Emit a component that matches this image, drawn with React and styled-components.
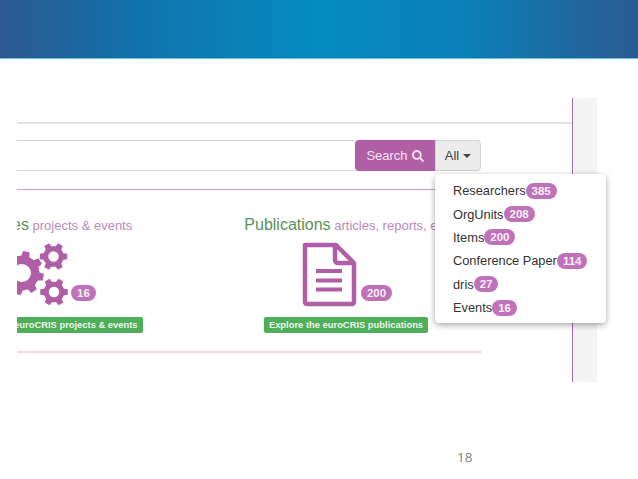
import styled, { createGlobalStyle } from 'styled-components';
import { FaSearch } from 'react-icons/fa';

const MENU_ITEMS = [
    { label: 'Researchers', count: 385 },
    { label: 'OrgUnits', count: 208 },
    { label: 'Items', count: 200 },
    { label: 'Conference Paper', count: 114 },
    { label: 'dris', count: 27 },
    { label: 'Events', count: 16 },
];

// toothed ring outline with a round hole, filled evenodd
const gearPath = (cx, cy, outer, root, hole, teeth, start) => {
    const step = (Math.PI * 2) / teeth;
    const at = (r, a) => `${(cx + r * Math.cos(a)).toFixed(2)} ${(cy + r * Math.sin(a)).toFixed(2)}`;
    let d = '';
    for (let i = 0; i < teeth; i++) {
        const a = start + i * step;
        d += `${i ? 'L' : 'M'}${at(root, a - step * 0.3)}L${at(outer, a - step * 0.19)}L${at(outer, a + step * 0.19)}L${at(root, a + step * 0.3)}`;
    }
    d += `Z M${cx - hole} ${cy}a${hole} ${hole} 0 1 0 ${hole * 2} 0a${hole} ${hole} 0 1 0 ${-hole * 2} 0Z`;
    return d;
};

function GearsIcon() {
    return (
        <svg width='74' height='64' viewBox='0 0 74 64' fill='#b05ea5' fillRule='evenodd'>
            <path d={gearPath(28, 30, 22, 17.5, 9, 8, 0.2)} />
            <path d={gearPath(59.5, 13.5, 14, 10.5, 5.2, 6, 0)} />
            <path d={gearPath(60, 49, 14, 10.5, 5.2, 6, 0)} />
        </svg>
    );
}

function DocumentIcon() {
    return (
        <svg width='55' height='65' viewBox='0 0 55 65' fill='none'>
            <path d='M3 3H34L52 21V60a2 2 0 0 1-2 2H5a2 2 0 0 1-2-2Z' stroke='#b05ea5' strokeWidth='4.5' strokeLinejoin='round' />
            <path d='M33 3V18a3 3 0 0 0 3 3H52' stroke='#b05ea5' strokeWidth='4.5' strokeLinejoin='round' />
            <path d='M14 29H40M14 38.5H40M14 47.5H40' stroke='#b05ea5' strokeWidth='4.2' />
        </svg>
    );
}

function App() {
    return (
        <Page>
            <GlobalStyle />
            <Banner />
            <Slide>
                <Content>
                    <TopRule />
                    <SearchArea>
                        <SearchInput />
                        <SearchButton>
                            Search <FaSearch size={12} />
                        </SearchButton>
                        <FilterButton>
                            All <Caret />
                        </FilterButton>
                        <Menu>
                            {MENU_ITEMS.map(item => (
                                <MenuRow key={item.label}>
                                    {item.label}
                                    <Badge>{item.count}</Badge>
                                </MenuRow>
                            ))}
                        </Menu>
                    </SearchArea>
                    <Divider $top={18} $width={418} $color='#c79fc4' />
                    <Columns>
                        <Column $offset={-78} $gap={77}>
                            <Heading>
                                <strong>Activities</strong> projects &amp; events
                            </Heading>
                            <IconRow $left={-8} $gap={3}>
                                <GearsIcon />
                                <IconBadge>16</IconBadge>
                            </IconRow>
                            <GreenLink>Explore the euroCRIS projects &amp; events</GreenLink>
                        </Column>
                        <Column $offset={0} $gap={0}>
                            <Heading>
                                <strong>Publications</strong> articles, reports, etc
                            </Heading>
                            <IconRow $left={2} $gap={4}>
                                <DocumentIcon />
                                <IconBadge>200</IconBadge>
                            </IconRow>
                            <GreenLink>Explore the euroCRIS publications</GreenLink>
                        </Column>
                    </Columns>
                    <Divider $top={18} $width={465} $height={2} $color='#ecd9ea' />
                </Content>
                <Sidebar />
            </Slide>
            <PageNumber>18</PageNumber>
        </Page>
    );
}

const GlobalStyle = createGlobalStyle`
    html, body {
        margin: 0;
        padding: 0;
        background: #fff;
        font-family: 'Liberation Sans', Arial, sans-serif;
    }
`;

const Page = styled.div`
    width: 638px;
    height: 479px;
    overflow: hidden;
`;

const Banner = styled.div`
    height: 59px;
    box-sizing: border-box;
    border-bottom: 1px solid #6fc0dc;
    background: linear-gradient(90deg, #2d5890 0%, #0f73ad 22%, #058cc0 50%, #0a80b8 72%, #2b5a92 100%);
`;

const Slide = styled.div`
    display: flex;
    height: 284px;
    margin: 39px 41px 0 17px;
`;

const Content = styled.div`
    width: 555px;
    border-right: 1px solid #a868a5;
`;

const Sidebar = styled.div`
    flex: 1;
    background: #f3f3f3;
`;

const TopRule = styled.div`
    height: 2px;
    margin-top: 24px;
    background: #e6e0e6;
`;

const SearchArea = styled.div`
    position: relative;
    display: flex;
    width: 464px;
    margin-top: 16px;
`;

const SearchInput = styled.div`
    flex: 1;
    height: 31px;
    box-sizing: border-box;
    border-top: 1px solid #d4d4d4;
    border-bottom: 1px solid #d4d4d4;
`;

const SearchButton = styled.div`
    display: flex;
    align-items: center;
    justify-content: center;
    gap: 4px;
    width: 80px;
    height: 31px;
    border-radius: 4px 0 0 4px;
    background: #b05ea5;
    color: #f4e4f2;
    font-size: 13px;
`;

const FilterButton = styled.div`
    display: flex;
    align-items: center;
    justify-content: center;
    gap: 4px;
    width: 46px;
    height: 31px;
    box-sizing: border-box;
    border: 1px solid #d2d2d2;
    border-radius: 0 4px 4px 0;
    background: #ececec;
    color: #444;
    font-size: 13px;
`;

const Caret = styled.span`
    width: 0;
    height: 0;
    border-top: 4px solid #444;
    border-left: 4px solid transparent;
    border-right: 4px solid transparent;
`;

const Menu = styled.div`
    position: absolute;
    left: 418px;
    top: 34px;
    z-index: 2;
    width: 171px;
    height: 149px;
    box-sizing: border-box;
    padding: 5px 0 0 18px;
    border-radius: 4px;
    background: #fff;
    box-shadow: 0 2px 6px rgba(0, 0, 0, 0.35);
`;

const MenuRow = styled.div`
    display: flex;
    align-items: center;
    height: 23.4px;
    color: #333;
    font-size: 12.8px;
    white-space: nowrap;
`;

const Badge = styled.span`
    display: inline-block;
    height: 16px;
    padding: 0 6px;
    border-radius: 8px;
    background: #bf72b7;
    color: #f8eef7;
    font-size: 11.5px;
    font-weight: bold;
    line-height: 16px;
`;

const IconBadge = styled(Badge)`
    margin-bottom: 6px;
`;

const Divider = styled.div`
    width: ${({ $width }) => $width}px;
    height: ${({ $height = 1 }) => $height}px;
    margin-top: ${({ $top }) => $top}px;
    background: ${({ $color }) => $color};
`;

const Columns = styled.div`
    display: flex;
    width: 465px;
    height: 117px;
    margin-top: 26px;
    overflow: hidden;
`;

const Column = styled.div`
    display: flex;
    flex-direction: column;
    align-items: center;
    flex: 0 0 auto;
    width: 220px;
    margin-left: ${({ $offset }) => $offset}px;
    margin-right: ${({ $gap }) => $gap}px;
`;

const Heading = styled.div`
    height: 20px;
    margin-top: -1px;
    margin-bottom: 1px;
    color: #b98bb8;
    font-size: 13px;
    line-height: 20px;
    white-space: nowrap;

    strong {
        color: #5c8f5c;
        font-size: 16px;
        font-weight: normal;
    }
`;

const IconRow = styled.div`
    display: flex;
    align-items: flex-end;
    gap: ${({ $gap }) => $gap}px;
    height: 64px;
    margin: 7px 0 10px ${({ $left }) => $left}px;
`;

const GreenLink = styled.div`
    height: 16px;
    padding: 0 5px;
    border-radius: 2px;
    background: #4fae5a;
    color: #eaf6ea;
    font-size: 9.4px;
    font-weight: bold;
    line-height: 16px;
    white-space: nowrap;
`;

const PageNumber = styled.div`
    margin: 66px 0 0 457px;
    color: #808080;
    font-family: 'Open Sans', sans-serif;
    font-size: 13.5px;
`;

export default App;
